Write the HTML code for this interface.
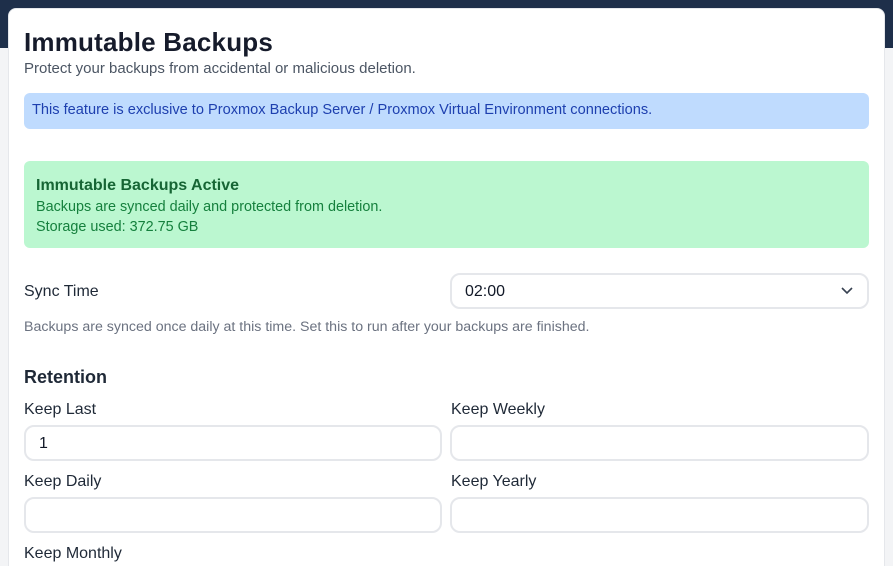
<!DOCTYPE html>
<html><head><style>
*{box-sizing:border-box;margin:0;padding:0}
html,body{width:893px;height:566px;overflow:hidden}
body{background:#f3f4f6;font-family:"Liberation Sans",sans-serif;color:#1f2937;position:relative}
.top{position:absolute;left:0;top:0;width:893px;height:48px;background:#1e2f4a}
.card{position:absolute;left:8px;top:8px;width:877px;height:580px;background:#fff;border-radius:8px;border:1px solid #e5e7eb}
.abs{position:absolute}
h1{position:absolute;left:24px;top:27px;font-size:26px;font-weight:bold;color:#161b2b;letter-spacing:0.2px}
.sub{left:24px;top:60px;font-size:15px;color:#4b5563}
.info{left:24px;top:93px;width:845px;height:36px;background:#bfdbfe;border-radius:6px;color:#1e40af;font-size:14.6px;padding:9px 8px}
.ok{left:24px;top:161px;width:845px;height:87px;background:#bbf7d0;border-radius:6px;color:#15803d;font-size:14.4px;padding:16px 12px;line-height:20px}
.ok b{color:#166534;font-size:16px;display:block;line-height:18px;margin-bottom:2px}
.lbl{font-size:16px;color:#1f2937}
.inp{position:absolute;height:36px;border:2px solid #e5e7eb;border-radius:10px;background:#fff;font-size:16px;padding:8px 13px;color:#111827}
.help{left:24px;top:319px;font-size:14.2px;color:#6b7280}
.h2{left:24px;top:367px;font-size:18px;font-weight:bold;color:#1f2937}
.side{position:absolute;left:885px;top:48px;width:8px;height:518px;background:#f3f4f6}
</style></head><body>
<div class="top"></div>
<div class="side"></div>
<div class="card"></div>
<h1>Immutable Backups</h1>
<div class="abs sub">Protect your backups from accidental or malicious deletion.</div>
<div class="abs info">This feature is exclusive to Proxmox Backup Server / Proxmox Virtual Environment connections.</div>
<div class="abs ok"><b>Immutable Backups Active</b>Backups are synced daily and protected from deletion.<br>Storage used: 372.75 GB</div>
<div class="abs lbl" style="left:24px;top:283px">Sync Time</div>
<div class="inp" style="left:450px;top:273px;width:419px">02:00
<svg style="position:absolute;right:13px;top:11px" width="14" height="10" viewBox="0 0 14 10"><path d="M2 2l5 5 5-5" fill="none" stroke="#374151" stroke-width="1.6"/></svg></div>
<div class="abs help">Backups are synced once daily at this time. Set this to run after your backups are finished.</div>
<div class="abs h2">Retention</div>
<div class="abs lbl" style="left:24px;top:401px">Keep Last</div>
<div class="abs lbl" style="left:451px;top:401px">Keep Weekly</div>
<div class="inp" style="left:24px;top:425px;width:418px">1</div>
<div class="inp" style="left:450px;top:425px;width:419px"></div>
<div class="abs lbl" style="left:24px;top:473px">Keep Daily</div>
<div class="abs lbl" style="left:451px;top:473px">Keep Yearly</div>
<div class="inp" style="left:24px;top:497px;width:418px"></div>
<div class="inp" style="left:450px;top:497px;width:419px"></div>
<div class="abs lbl" style="left:24px;top:545px">Keep Monthly</div>
</body></html>
